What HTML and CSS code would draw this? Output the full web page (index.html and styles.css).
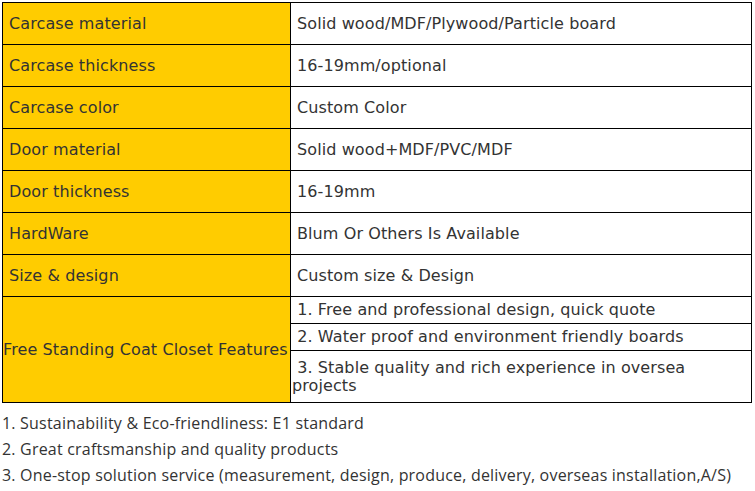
FILE: index.html
```html
<!DOCTYPE html>
<html lang="en">
<head>
<meta charset="utf-8">
<title>Free Standing Coat Closet</title>
<link rel="stylesheet" href="styles.css">
</head>
<body>
<div class="page">
<table class="spec">
  <colgroup><col class="c1"><col class="c2"></colgroup>
  <tbody>
    <tr><td class="label">Carcase material</td><td class="val">Solid wood/MDF/Plywood/Particle board</td></tr>
    <tr><td class="label">Carcase thickness</td><td class="val">16-19mm/optional</td></tr>
    <tr><td class="label">Carcase color</td><td class="val">Custom Color</td></tr>
    <tr><td class="label">Door material</td><td class="val">Solid wood+MDF/PVC/MDF</td></tr>
    <tr><td class="label">Door thickness</td><td class="val">16-19mm</td></tr>
    <tr><td class="label">HardWare</td><td class="val">Blum Or Others Is Available</td></tr>
    <tr><td class="label">Size &amp; design</td><td class="val">Custom size &amp; Design</td></tr>
    <tr class="sub"><td class="label feat" rowspan="3">Free Standing Coat Closet Features</td><td class="subval">&nbsp;1. Free and professional design, quick quote</td></tr>
    <tr class="sub"><td class="subval">&nbsp;2. Water proof and environment friendly boards</td></tr>
    <tr class="sub tall"><td class="subval">&nbsp;3. Stable quality and rich experience in oversea projects</td></tr>
  </tbody>
</table>
<div class="notes">
  <p>1. Sustainability &amp; Eco-friendliness: E1 standard</p>
  <p>2. Great craftsmanship and quality products</p>
  <p>3. One-stop solution service (measurement, design, produce, delivery, overseas installation,A/S)</p>
</div>
</div>
</body>
</html>
```

FILE: styles.css
```css
html, body {
  margin: 0;
  padding: 0;
  background: #ffffff;
}

.page {
  padding: 2px 0 0 2px;
}

.spec {
  border-collapse: collapse;
  width: 750px;
  table-layout: fixed;
  font-family: "DejaVu Sans", Verdana, sans-serif;
  font-size: 16px;
  letter-spacing: 0.1px;
  color: #333333;
}

.c1 { width: 288px; }

.spec td {
  border: 1px solid #000000;
  height: 41px;
  padding: 0 6px;
  vertical-align: middle;
  line-height: 18px;
}

.spec td.label {
  background: #ffcc00;
}

.spec td.feat {
  padding: 0;
  white-space: nowrap;
}

.spec tr.sub td.subval {
  height: 26px;
  padding: 0 1px;
}

.spec tr.tall td.subval {
  height: 51px;
}

.notes {
  font-family: "Open Sans", "Noto Sans", sans-serif;
  font-size: 16px;
  letter-spacing: 0.2px;
  color: #333333;
  padding-top: 7px;
}

.notes p {
  margin: 0;
  line-height: 26px;
}
```
